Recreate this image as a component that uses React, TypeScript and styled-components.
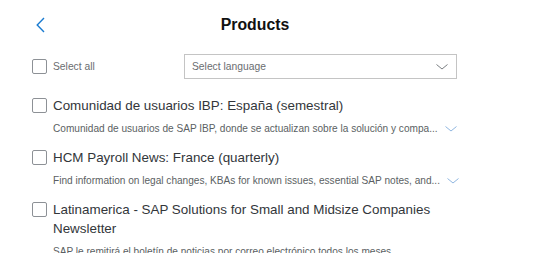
import styled, { createGlobalStyle } from "styled-components";

const GlobalStyle = createGlobalStyle`
  body {
    margin: 0;
    background: #ffffff;
    font-family: "Liberation Sans", Arial, sans-serif;
    color: #32363a;
  }
`;

type ProductType = {
  title: string;
  description: string;
  expandable: boolean;
};

const products: ProductType[] = [
  {
    title: "Comunidad de usuarios IBP: España (semestral)",
    description:
      "Comunidad de usuarios de SAP IBP, donde se actualizan sobre la solución y compa...",
    expandable: true,
  },
  {
    title: "HCM Payroll News: France (quarterly)",
    description:
      "Find information on legal changes, KBAs for known issues, essential SAP notes, and...",
    expandable: true,
  },
  {
    title:
      "Latinamerica - SAP Solutions for Small and Midsize Companies Newsletter",
    description:
      "SAP le remitirá el boletín de noticias por correo electrónico todos los meses",
    expandable: false,
  },
];

const Page = styled.div`
  width: 510px;
  padding-top: 16px;
`;

const Header = styled.div`
  display: grid;
  grid-template-columns: 1fr auto 1fr;
  align-items: center;
  height: 16px;
`;

const BackButton = styled.button`
  justify-self: start;
  margin-left: 36px;
  padding: 0;
  border: none;
  background: none;
  display: flex;
  cursor: pointer;
`;

const Title = styled.h1`
  margin: 0;
  font-size: 15.8px;
  font-weight: bold;
  color: #111;
  line-height: 16px;
  padding-top: 1px;
`;

const Content = styled.div`
  padding-left: 32px;
`;

const Controls = styled.div`
  display: flex;
  align-items: center;
  margin-top: 22px;
`;

const SelectAll = styled.label`
  width: 152px;
  display: flex;
  align-items: center;
  gap: 6px;
  font-size: 10.3px;
  color: #6a6d70;
`;

const Box = styled.span`
  flex: none;
  width: 13px;
  height: 13px;
  border: 1px solid #8d9196;
  border-radius: 2px;
  background: #fff;
`;

const Select = styled.div`
  box-sizing: border-box;
  width: 273px;
  height: 25px;
  border: 1px solid #c4c4c4;
  display: flex;
  align-items: center;
  justify-content: space-between;
  padding: 0 8px 0 7px;
  font-size: 10.3px;
  color: #6a6d70;
`;

const List = styled.div`
  margin-top: 17px;
  display: flex;
  flex-direction: column;
  gap: 10px;
`;

const Item = styled.div`
  display: flex;
  flex-direction: column;
`;

const ItemHead = styled.div`
  display: flex;
  align-items: flex-start;
  gap: 6px;

  ${Box} {
    margin-top: 2px;
  }
`;

const ItemTitle = styled.div`
  font-size: 13.4px;
  line-height: 19px;
  color: #32363a;
  width: 410px;
`;

const ItemDescription = styled.div`
  display: flex;
  align-items: center;
  gap: 7px;
  margin-top: 4px;
  padding-left: 21px;
  font-size: 10.1px;
  line-height: 19px;
  color: #5b5f63;
  white-space: nowrap;
`;

const Chevron = ({ colour }: { colour: string }) => (
  <svg width="12" height="6" viewBox="0 0 12 6">
    <polyline
      points="0.5,0.5 6,5 11.5,0.5"
      fill="none"
      stroke={colour}
      strokeWidth="1"
    />
  </svg>
);

const App = () => {
  return (
    <>
      <GlobalStyle />
      <Page>
        <Header>
          <BackButton aria-label="Back">
            <svg width="9" height="16" viewBox="0 0 9 16">
              <polyline
                points="8,1 1.2,8 8,15"
                fill="none"
                stroke="#1a7bd0"
                strokeWidth="1.4"
              />
            </svg>
          </BackButton>
          <Title>Products</Title>
          <span />
        </Header>
        <Content>
          <Controls>
            <SelectAll>
              <Box />
              Select all
            </SelectAll>
            <Select>
              Select language
              <Chevron colour="#7a7e82" />
            </Select>
          </Controls>
          <List>
            {products.map((item, i) => (
              <Item key={i}>
                <ItemHead>
                  <Box />
                  <ItemTitle>{item.title}</ItemTitle>
                </ItemHead>
                <ItemDescription>
                  {item.description}
                  {item.expandable && <Chevron colour="#8fb6e0" />}
                </ItemDescription>
              </Item>
            ))}
          </List>
        </Content>
      </Page>
    </>
  );
};

export default App;
